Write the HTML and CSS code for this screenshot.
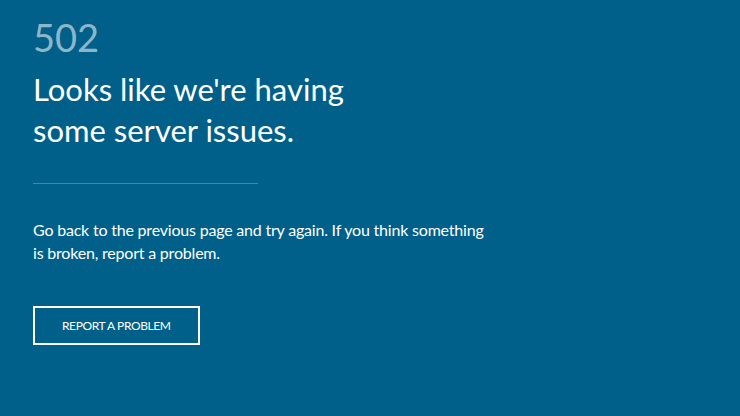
FILE: index.html
```html
<!DOCTYPE html>
<html lang="en">
<head>
    <meta charset="UTF-8">
    <meta name="viewport" content="width=device-width, initial-scale=1.0">
    <title>502 - Server error</title>
    <link rel="stylesheet" href="styles.css">
</head>
<body>
    <div class="container">
        <div class="error-code">502</div>
        <h1 class="error-title">Looks like we're having<br>some server issues.</h1>
        <hr class="divider">
        <p class="error-text">Go back to the previous page and try again. If you think something is broken, report a problem.</p>
        <a class="report-button" href="#">REPORT A PROBLEM</a>
    </div>
</body>
</html>
```

FILE: styles.css
```css
body {
    font-family: 'Lato', 'Open Sans', sans-serif;
    margin: 0;
    padding: 0;
    background-color: #00608a;
    color: #fff;
}
.container {
    padding: 15px 33px 40px;
}
.error-code {
    font-size: 38px;
    line-height: 44px;
    color: #8cb7ca;
}
.error-title {
    font-size: 31px;
    font-weight: 400;
    line-height: 41px;
    margin: 10px 0 0;
}
.divider {
    width: 225px;
    margin: 32px 0 0;
    border: none;
    border-top: 1px solid rgba(255, 255, 255, 0.25);
}
.error-text {
    max-width: 455px;
    font-size: 16px;
    line-height: 23px;
    letter-spacing: -0.2px;
    margin: 34px 0 0;
}
.report-button {
    display: block;
    width: fit-content;
    margin-top: 42px;
    padding: 10px 27px 9px;
    border: 2px solid #fff;
    color: #fff;
    text-decoration: none;
    font-size: 12px;
    line-height: 16px;
    letter-spacing: -0.4px;
}
```
